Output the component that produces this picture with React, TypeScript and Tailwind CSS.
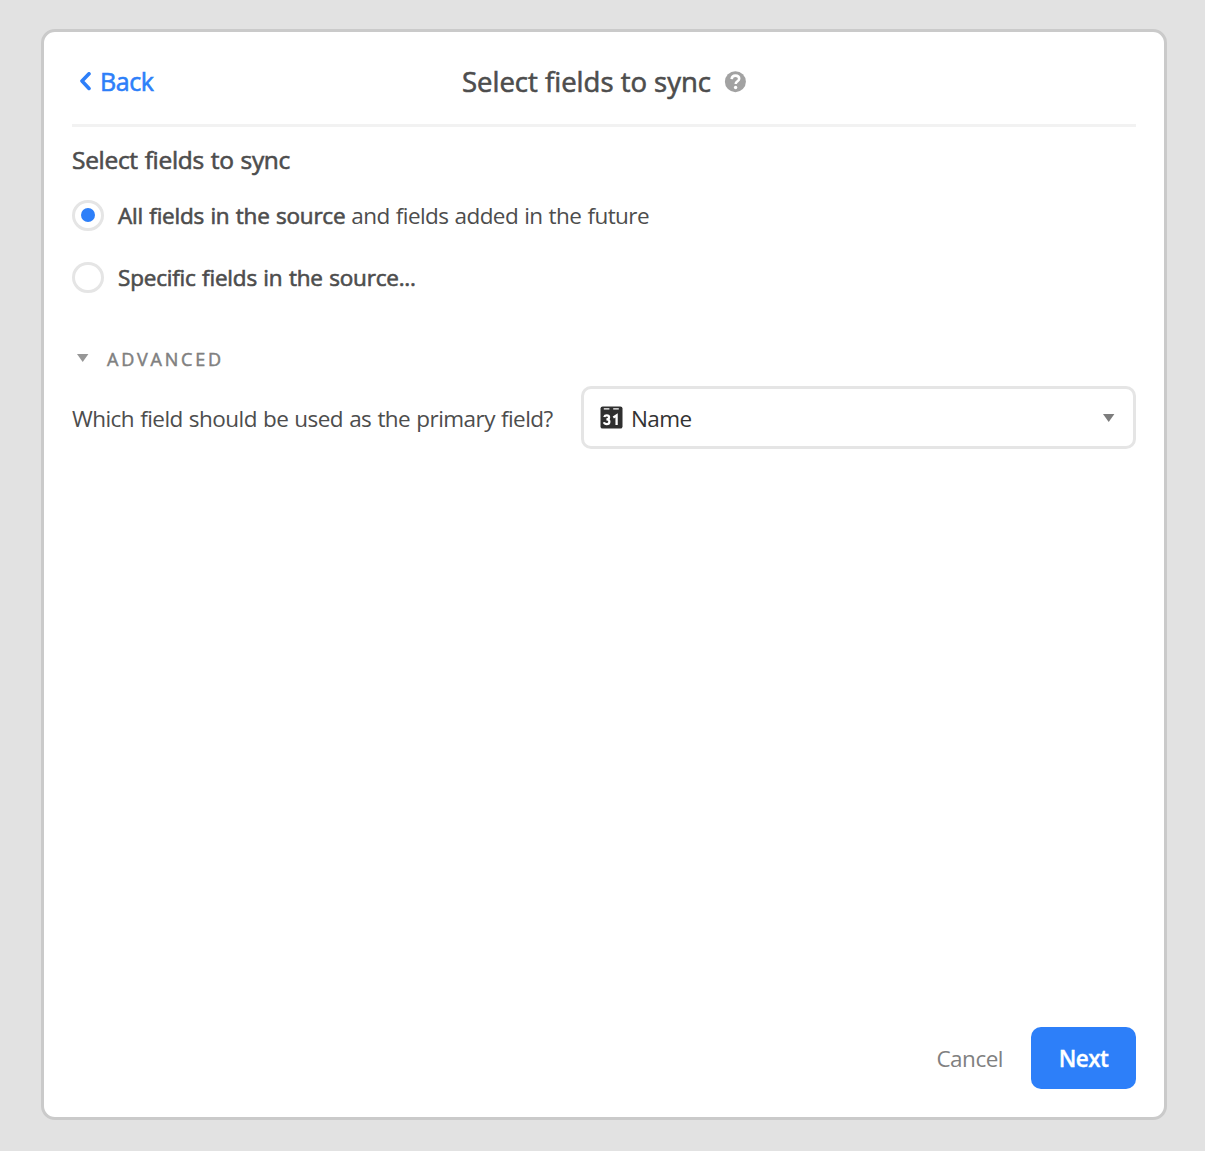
import { useState } from "react";

function ChevronLeftIcon() {
  return (
    <svg width={13} height={20} viewBox="0 0 13 20" fill="none">
      <path
        d="M10 1.8L3 9.1L10 16.4"
        stroke="#2d7ff9"
        strokeWidth="3.6"
        strokeLinecap="round"
        strokeLinejoin="round"
      />
    </svg>
  );
}

function HelpIcon() {
  return (
    <svg width={22} height={22} viewBox="0 0 22 22" fill="none">
      <circle cx={11.4} cy={10.7} r={10.5} fill="#a2a2a2" />
      <path
        d="M7.6 8.1C7.9 5.7 9.4 4.6 11.4 4.6C13.6 4.6 15.2 5.8 15.2 7.8C15.2 10.3 11.7 10.2 11.7 12.9"
        stroke="#fff"
        strokeWidth="2.6"
      />
      <circle cx={11.6} cy={16.5} r={1.7} fill="#fff" />
    </svg>
  );
}

function CalendarIcon() {
  return (
    <svg width={23} height={23} viewBox="0 0 23 23" fill="none">
      <rect x={0.5} y={0.4} width={22} height={22.2} rx={2.2} fill="#2f2f2f" />
      <path d="M3.8 2.9H9.4M13.2 2.9H18.8" stroke="#fff" strokeWidth="1.4" />
      <path
        d="M4.2 11C4.6 9.8 5.5 9.3 6.7 9.3C8.1 9.3 9.1 10 9.1 11.3C9.1 12.6 8.1 13.4 6.4 13.4C8.3 13.4 9.4 14.2 9.4 15.7C9.4 17.2 8.3 18.1 6.7 18.1C5.3 18.1 4.3 17.5 3.9 16.2"
        stroke="#fff"
        strokeWidth="2.2"
      />
      <path d="M13.3 11.5L16.6 9.4V19" stroke="#fff" strokeWidth="2.3" />
    </svg>
  );
}

function CaretIcon({ color }: { color: string }) {
  return (
    <svg width={12} height={8} viewBox="0 0 12 8">
      <path d="M0 0H11.4L5.7 8Z" fill={color} />
    </svg>
  );
}

function Radio({ checked }: { checked: boolean }) {
  return (
    <span className="flex h-[31px] w-8 shrink-0 items-center justify-center rounded-full border-3 border-[#e5e5e5] bg-white">
      {checked && <span className="mb-px size-3.5 rounded-full bg-[#2d7ff9]" />}
    </span>
  );
}

export default function App() {
  const [mode, setMode] = useState("all");

  return (
    <div className="flex h-[1151px] w-[1205px] bg-[#e2e2e2] pt-[29px] pl-[41px] font-['Open_Sans','Noto_Sans',sans-serif] whitespace-nowrap text-[#4d4d4d]">
      <div className="flex h-[1091px] w-[1126px] flex-col rounded-[14px] border-3 border-[#cacaca] bg-white px-7 pb-7">
        {/* Header */}
        <div className="grid h-[95px] shrink-0 grid-cols-[1fr_auto_1fr] items-center border-b-3 border-[#f2f2f2] pt-2">
          <button className="flex items-center gap-2 pl-[7px] text-[25px] tracking-[-0.4px] text-[#2d7ff9] [-webkit-text-stroke:0.6px_currentColor]">
            <ChevronLeftIcon />
            <span>Back</span>
          </button>
          <div className="flex items-center gap-[13px]">
            <h1 className="text-[27.5px] [-webkit-text-stroke:0.6px_currentColor]">Select fields to sync</h1>
            <HelpIcon />
          </div>
          <div />
        </div>

        {/* Field choice */}
        <h2 className="mt-[17px] text-[24.5px] leading-8 tracking-[-0.3px] [-webkit-text-stroke:0.6px_currentColor] [word-spacing:0.8px]">
          Select fields to sync
        </h2>
        <div className="mt-6 flex flex-col gap-[31px] text-[22.5px] leading-[29px]">
          <button className="flex items-center gap-3.5" onClick={() => setMode("all")}>
            <Radio checked={mode === "all"} />
            <span>
              <span className="tracking-[-0.23px] [-webkit-text-stroke:0.6px_currentColor] [word-spacing:0.8px]">
                All fields in the source
              </span>
              <span className="tracking-[-0.57px] [word-spacing:0.8px]"> and fields added in the future</span>
            </span>
          </button>
          <button className="flex items-center gap-3.5" onClick={() => setMode("specific")}>
            <Radio checked={mode === "specific"} />
            <span className="tracking-[-0.2px] [-webkit-text-stroke:0.6px_currentColor] [word-spacing:0.8px]">
              Specific fields in the source...
            </span>
          </button>
        </div>

        {/* Advanced */}
        <div className="mt-[54px] flex h-6 items-center gap-[18px] pl-[5px] text-[#808080]">
          <span className="flex pb-0.5">
            <CaretIcon color="#979797" />
          </span>
          <span className="text-[18px] tracking-[2.8px] [-webkit-text-stroke:0.5px_currentColor]">ADVANCED</span>
        </div>
        <div className="mt-[15px] flex items-center justify-between">
          <span className="pt-0.5 text-[22.5px] tracking-[-0.55px] [word-spacing:0.8px]">
            Which field should be used as the primary field?
          </span>
          <button className="flex h-[63px] w-[555px] items-center rounded-[10px] border-3 border-[#e5e5e5] pr-[18px] pl-4 text-[#333333]">
            <CalendarIcon />
            <span className="ml-2 flex-1 pt-0.5 text-left text-[22.5px] tracking-[-0.6px]">Name</span>
            <CaretIcon color="#7d7d7d" />
          </button>
        </div>

        {/* Footer */}
        <div className="mt-auto flex items-center justify-end gap-7">
          <button className="pt-0.5 text-[22.5px] tracking-[-0.5px] text-[#808080]">Cancel</button>
          <button className="h-[62px] w-[105px] rounded-[10px] bg-[#2d7ff9] pt-0.5 text-[22.5px] font-semibold tracking-[-0.6px] text-white [-webkit-text-stroke:0.3px_currentColor]">
            Next
          </button>
        </div>
      </div>
    </div>
  );
}
